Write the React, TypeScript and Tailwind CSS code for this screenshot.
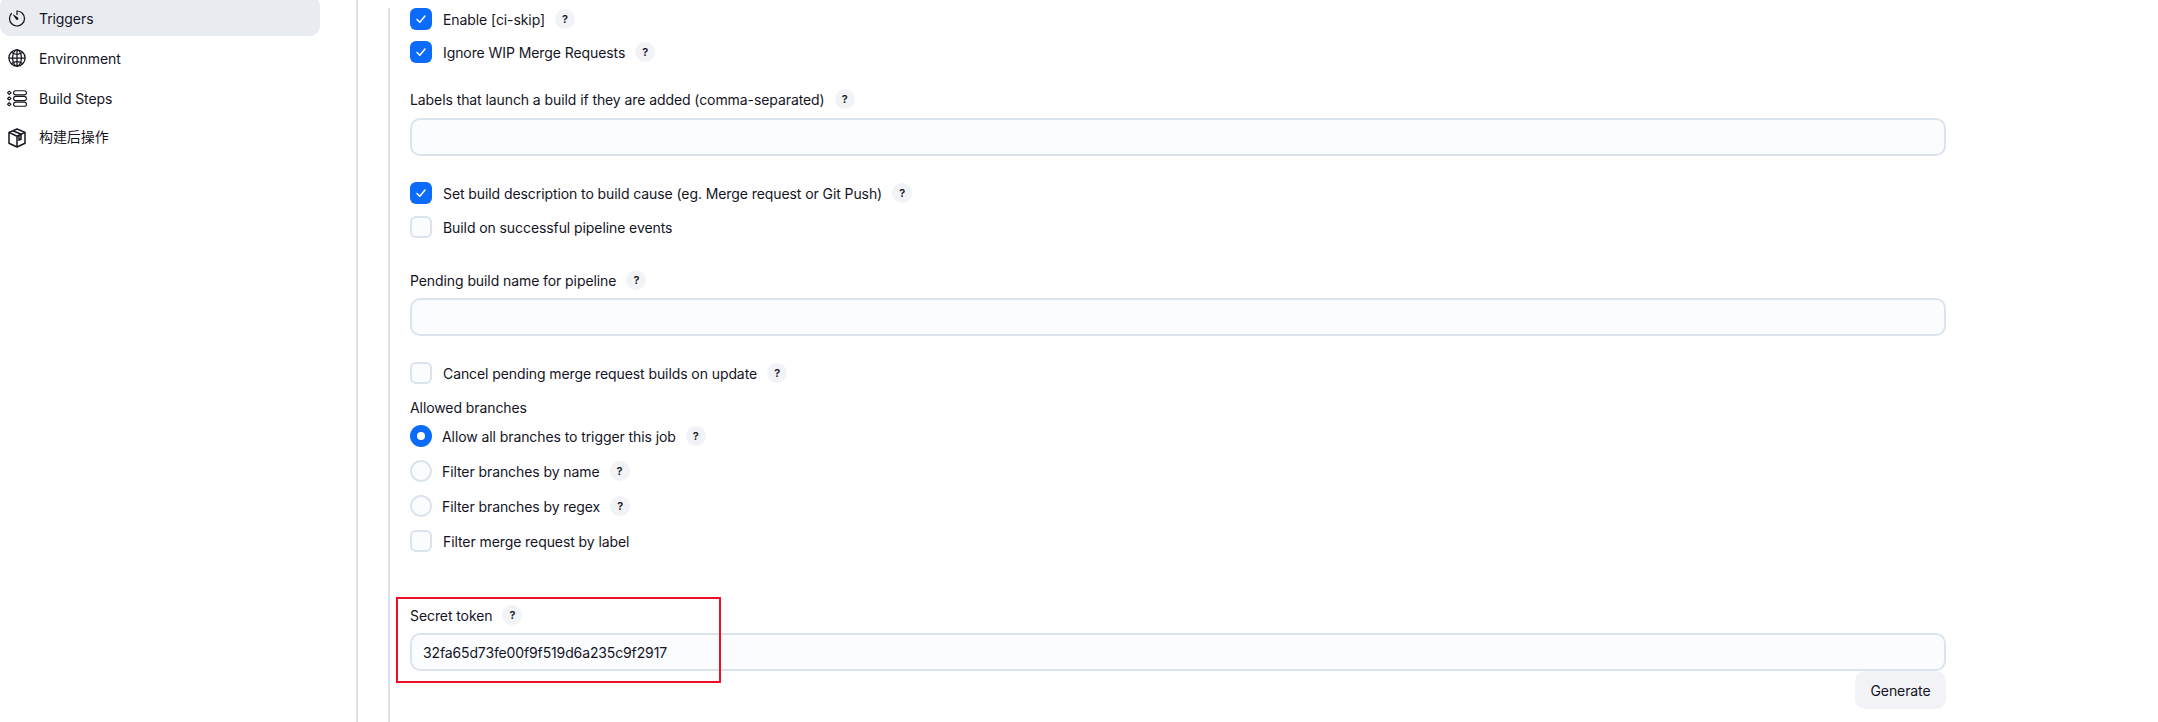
import React from "react";
import { IoTimerOutline, IoGlobeOutline } from "react-icons/io5";

const FONT = "font-['Inter','Noto_Sans_CJK_SC',sans-serif]";

function StepsIcon() {
  return (
    <svg viewBox="0 0 20 17" className="w-5 h-[17px]" fill="none" stroke="#14141f" strokeWidth="1.1">
      <path d="M2.2 1.2 4 2.8 2.2 4.4 0.6 2.8Z" />
      <path d="M2.2 6.9 4 8.5 2.2 10.1 0.6 8.5Z" />
      <path d="M2.2 12.6 4 14.2 2.2 15.8 0.6 14.2Z" />
      <rect x="6.6" y="0.7" width="12.8" height="4.2" rx="2.1" />
      <rect x="6.6" y="6.4" width="12.8" height="4.2" rx="2.1" />
      <rect x="6.6" y="12.1" width="12.8" height="4.2" rx="2.1" />
    </svg>
  );
}

function BoxIcon() {
  return (
    <svg viewBox="0 0 20 20" className="w-5 h-5" fill="none" stroke="#14141f" strokeWidth="1.5" strokeLinejoin="round">
      <path d="M10 1 18 4.4v10.8L10 19 2 15.2V4.4Z" />
      <path d="M2 4.4 10 8.2 18 4.4M10 8.2V19" />
      <path d="M6 2.7 14 6.3v5l-2 .8V7.2" />
    </svg>
  );
}

function Nav({ icon, label, active, labelClass = "" }: { icon: React.ReactNode; label: string; active?: boolean; labelClass?: string }) {
  return (
    <div className={`flex items-center h-10 pt-1 pl-[7px] gap-[12px] rounded-[10px] text-[14px] tracking-[-0.085px] text-[#14141f] ${active ? "bg-[#e9edf2]" : ""}`}>
      <span className="w-5 h-5 shrink-0 flex items-center justify-center">{icon}</span>
      <span className={labelClass}>{label}</span>
    </div>
  );
}

function Help() {
  return (
    <span className="ml-[10px] w-5 h-5 rounded-full bg-[#f2f3f7] flex items-center justify-center text-[11px] font-semibold text-[#14141f]">?</span>
  );
}

function Check({ on, label, help, className = "" }: { on?: boolean; label: string; help?: boolean; className?: string }) {
  return (
    <div className={`flex items-center h-[22px] text-[14px] tracking-[-0.085px] text-[#14141f] ${className}`}>
      <span className={`w-[22px] h-[22px] rounded-[6px] flex items-center justify-center shrink-0 ${on ? "bg-[#0b6bfb]" : "bg-[#fbfcfe] border-2 border-[#dbe3ef]"}`}>
        {on && (
          <svg viewBox="0 0 12 12" className="w-3 h-3" fill="none" stroke="white" strokeWidth="1.5" strokeLinecap="round" strokeLinejoin="round">
            <path d="M2 6.5 4.8 9.2 10 3" />
          </svg>
        )}
      </span>
      <span className="ml-[11px]">{label}</span>
      {help && <Help />}
    </div>
  );
}

function Radio({ on, label, className = "" }: { on?: boolean; label: string; className?: string }) {
  return (
    <div className={`flex items-center h-[22px] text-[14px] tracking-[-0.085px] text-[#14141f] ${className}`}>
      <span className={`w-[22px] h-[22px] rounded-full flex items-center justify-center shrink-0 ${on ? "bg-[#0b6bfb]" : "bg-[#fbfcfe] border-2 border-[#dbe3ef]"}`}>
        {on && <span className="w-2 h-2 rounded-full bg-white" />}
      </span>
      <span className="ml-[10px]">{label}</span>
      <Help />
    </div>
  );
}

function Label({ text, className = "" }: { text: string; className?: string }) {
  return (
    <div className={`flex items-center h-5 text-[14px] tracking-[-0.085px] text-[#14141f] ${className}`}>
      <span>{text}</span>
      <Help />
    </div>
  );
}

function TextInput({ value = "", className = "" }: { value?: string; className?: string }) {
  return (
    <div className={`h-[38px] w-full rounded-[10px] border-2 border-[#dbe3ef] bg-[#fbfcfe] px-[11px] flex items-center text-[14px] tracking-[-0.13px] text-[#14141f] ${className}`}>
      {value}
    </div>
  );
}

export default function App() {
  return (
    <div className={`${FONT} relative flex w-[2158px] h-[722px] overflow-hidden bg-white`}>
      <aside className="w-[320px] shrink-0 -mt-1 flex flex-col">
        <Nav active icon={<IoTimerOutline size={21} color="#14141f" />} label="Triggers" />
        <Nav icon={<IoGlobeOutline size={22} color="#14141f" />} label="Environment" />
        <Nav icon={<StepsIcon />} label="Build Steps" />
        <Nav icon={<BoxIcon />} label="构建后操作" labelClass="pb-[4px]" />
      </aside>
      <div className="ml-[36px] w-[2px] h-full bg-[#dbe3ef] shrink-0" />
      <div className="ml-[30px] mt-2 w-[2px] h-full bg-[#dbe3ef] shrink-0" />
      <main className="ml-[20px] w-[1536px] pt-2 flex flex-col">
        <Check on label="Enable [ci-skip]" help />
        <Check on label="Ignore WIP Merge Requests" help className="mt-[11px]" />
        <Label text="Labels that launch a build if they are added (comma-separated)" className="mt-[26px]" />
        <TextInput className="mt-[9px]" />
        <Check on label="Set build description to build cause (eg. Merge request or Git Push)" help className="mt-[26px]" />
        <Check label="Build on successful pipeline events" className="mt-[12px]" />
        <Label text="Pending build name for pipeline" className="mt-[32px]" />
        <TextInput className="mt-[8px]" />
        <Check label="Cancel pending merge request builds on update" help className="mt-[26px]" />
        <div className="mt-[13px] h-5 flex items-center text-[14px] tracking-[-0.085px] text-[#14141f]">Allowed branches</div>
        <Radio on label="Allow all branches to trigger this job" className="mt-[8px]" />
        <Radio label="Filter branches by name" className="mt-[13px]" />
        <Radio label="Filter branches by regex" className="mt-[13px]" />
        <Check label="Filter merge request by label" className="mt-[13px]" />
        <Label text="Secret token" className="mt-[53px]" />
        <TextInput value="32fa65d73fe00f9f519d6a235c9f2917" className="mt-[8px]" />
        <div className="flex justify-end">
          <button className="h-[38px] w-[91px] rounded-[10px] bg-[#f2f3f7] text-[14px] tracking-[-0.1px] text-[#14141f]">Generate</button>
        </div>
      </main>
      <div className="absolute left-[396px] top-[597px] w-[325px] h-[86px] border-2 border-[#f00d26]" />
    </div>
  );
}
